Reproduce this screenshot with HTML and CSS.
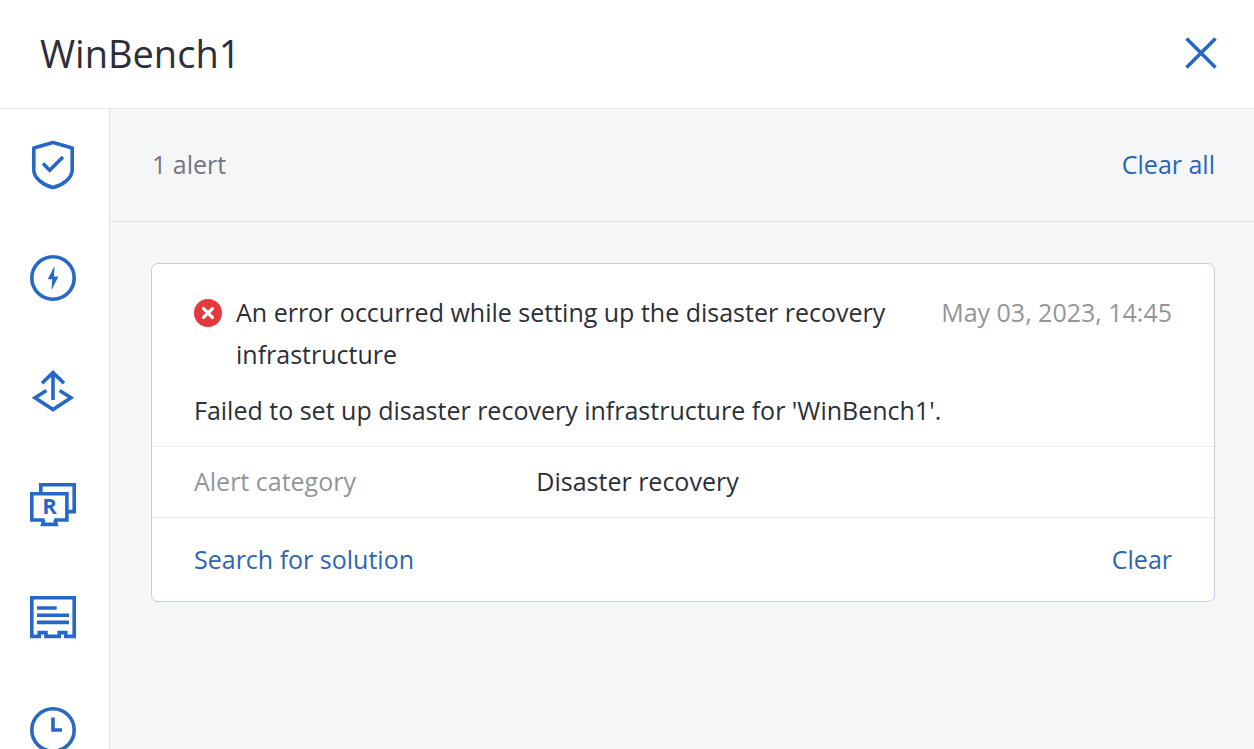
FILE: index.html
```html
<!DOCTYPE html>
<html lang="en">
<head>
    <meta charset="utf-8">
    <meta name="viewport" content="width=device-width, initial-scale=1">
    <title>WinBench1</title>
    <link rel="stylesheet" href="styles.css">
</head>
<body>
    <header class="header">
        <h1>WinBench1</h1>
        <button class="close-button" aria-label="Close">
            <svg width="32" height="32" viewBox="0 0 32 32"><path d="M1.5 1.5l29 29M30.5 1.5l-29 29" /></svg>
        </button>
    </header>

    <div class="layout">
        <nav class="sidebar">
            <a href="#protection" aria-label="Protection">
                <svg width="50" height="50" viewBox="0 0 50 50">
                    <path stroke-linejoin="round" d="M25 2.6L44.2 8V30C44.2 38 35 45 25 47.6C15 45 5.8 38 5.8 30V8Z" />
                    <path d="M15 23.6L21.7 30.3L35 17" />
                </svg>
            </a>
            <a href="#activities" aria-label="Activities">
                <svg width="50" height="50" viewBox="0 0 50 50">
                    <circle cx="25" cy="25" r="21.2" />
                    <path class="solid" d="M26.5 13L19.7 26.2H24.2L23.5 37L30.4 23.4H26Z" />
                </svg>
            </a>
            <a href="#recovery" aria-label="Recovery">
                <svg width="50" height="50" viewBox="0 0 50 50">
                    <path d="M25 34V7M14 17.2L25 6.6L36 17.2" />
                    <path d="M18.4 24.4L7 31.7L25 43.6L43 31.7L31.6 24.4" />
                </svg>
            </a>
            <a href="#remote" aria-label="Remote desktop">
                <svg width="50" height="50" viewBox="0 0 50 50">
                    <path d="M12.8 14V5.8H46.2V32.6H40" />
                    <path d="M16.6 41H3.8V14.8H38.9V41H26.2M15.8 41L14.6 45.4H28.2L27 41" />
                    <text x="21.4" y="35.4">R</text>
                </svg>
            </a>
            <a href="#details" aria-label="Details">
                <svg width="50" height="50" viewBox="0 0 50 50">
                    <path d="M3.8 5.8H46.2V44.4H37.8V40.6H31.2V44.4H18V40.6H11.2V44.4H3.8Z" />
                    <path d="M9 16H28.7M9 23.3H41M9 30.4H41" />
                </svg>
            </a>
            <a href="#history" aria-label="History">
                <svg width="50" height="50" viewBox="0 0 50 50">
                    <circle cx="25" cy="25" r="21.2" />
                    <path d="M25 12.5V25H34" />
                </svg>
            </a>
        </nav>

        <main>
            <div class="toolbar">
                <span>1 alert</span>
                <button class="link-button">Clear all</button>
            </div>

            <article class="alert">
                <div class="alert-body">
                    <div class="alert-heading">
                        <svg class="error-icon" width="28" height="28" viewBox="0 0 28 28">
                            <circle cx="14" cy="14" r="14" />
                            <path d="M9.6 9.6l8.8 8.8M18.4 9.6l-8.8 8.8" />
                        </svg>
                        <h2>An error occurred while setting up the disaster recovery infrastructure</h2>
                        <time datetime="2023-05-03T14:45">May 03, 2023, 14:45</time>
                    </div>
                    <p>Failed to set up disaster recovery infrastructure for 'WinBench1'.</p>
                </div>
                <dl class="alert-details">
                    <dt>Alert category</dt>
                    <dd>Disaster recovery</dd>
                </dl>
                <footer class="alert-actions">
                    <a href="#solution">Search for solution</a>
                    <button class="link-button">Clear</button>
                </footer>
            </article>
        </main>
    </div>
</body>
</html>
```
FILE: styles.css
```css
* { box-sizing: border-box; margin: 0; }

:root {
    --primary-color: #2668c5;
    --link-color: #2b66b4;
    --text-color: #2b2f38;
    --muted-color: #92969c;
    --background-color: #f4f6f8;
    --line-color: #dfe3ea;
}

body {
    display: flex;
    flex-direction: column;
    height: 100vh;
    overflow: hidden;
    font-family: 'Open Sans', sans-serif;
    font-size: 25px;
    line-height: 42px;
    color: var(--text-color);
    background-color: #fff;
}

h1, h2 { font-weight: 400; }

h1 {
    font-size: 38px;
    line-height: 54px;
}

h2 { font-size: inherit; }

a {
    color: var(--link-color);
    text-decoration: none;
}

button {
    padding: 0;
    border: none;
    background: none;
    font: inherit;
    cursor: pointer;
}

svg {
    display: block;
    flex: none;
    fill: none;
    stroke: var(--primary-color);
    stroke-width: 3.6;
}

.header {
    display: flex;
    flex: none;
    align-items: center;
    justify-content: space-between;
    padding: 26px 37px 28px 40px;
    border-bottom: 1px solid var(--line-color);
}

.layout {
    display: flex;
    flex: 1;
    min-height: 0;
}

.sidebar {
    flex: none;
    width: 110px;
    overflow: hidden;
    border-right: 1px solid var(--line-color);
}

.sidebar a {
    display: block;
    padding: 31px 28px 32px;
}

.sidebar text {
    fill: var(--primary-color);
    stroke: none;
    font-size: 22px;
    font-weight: 700;
    text-anchor: middle;
}

.sidebar .solid {
    fill: var(--primary-color);
    stroke: none;
}

main {
    flex: 1;
    overflow: auto;
    background-color: var(--background-color);
}

.toolbar {
    display: flex;
    justify-content: space-between;
    padding: 34px 39px 36px 42px;
    border-bottom: 1px solid var(--line-color);
    color: #73777c;
}

.link-button { color: var(--link-color); }

.alert {
    margin: 41px 39px 41px 41px;
    border: 1px solid #c2cee2;
    border-radius: 7px;
    background-color: #fff;
}

.alert-body { padding: 27px 42px 15px; }

.alert-heading {
    display: flex;
    gap: 14px;
    margin-bottom: 14px;
}

.alert-heading h2 {
    flex: 1;
    padding-right: 14px;
}

.alert-heading time {
    flex: none;
    color: var(--muted-color);
}

.error-icon {
    margin-top: 8px;
    fill: #e5383b;
    stroke: none;
}

.error-icon path {
    stroke: #fff;
    stroke-width: 3.4;
    stroke-linecap: round;
}

.alert-details {
    display: grid;
    grid-template-columns: 35% 1fr;
    padding: 13px 42px 15px;
    border: solid #e9edf3;
    border-width: 1px 0;
}

.alert-details dt { color: var(--muted-color); }

.alert-actions {
    display: flex;
    justify-content: space-between;
    padding: 20px 42px 21px;
}
```
